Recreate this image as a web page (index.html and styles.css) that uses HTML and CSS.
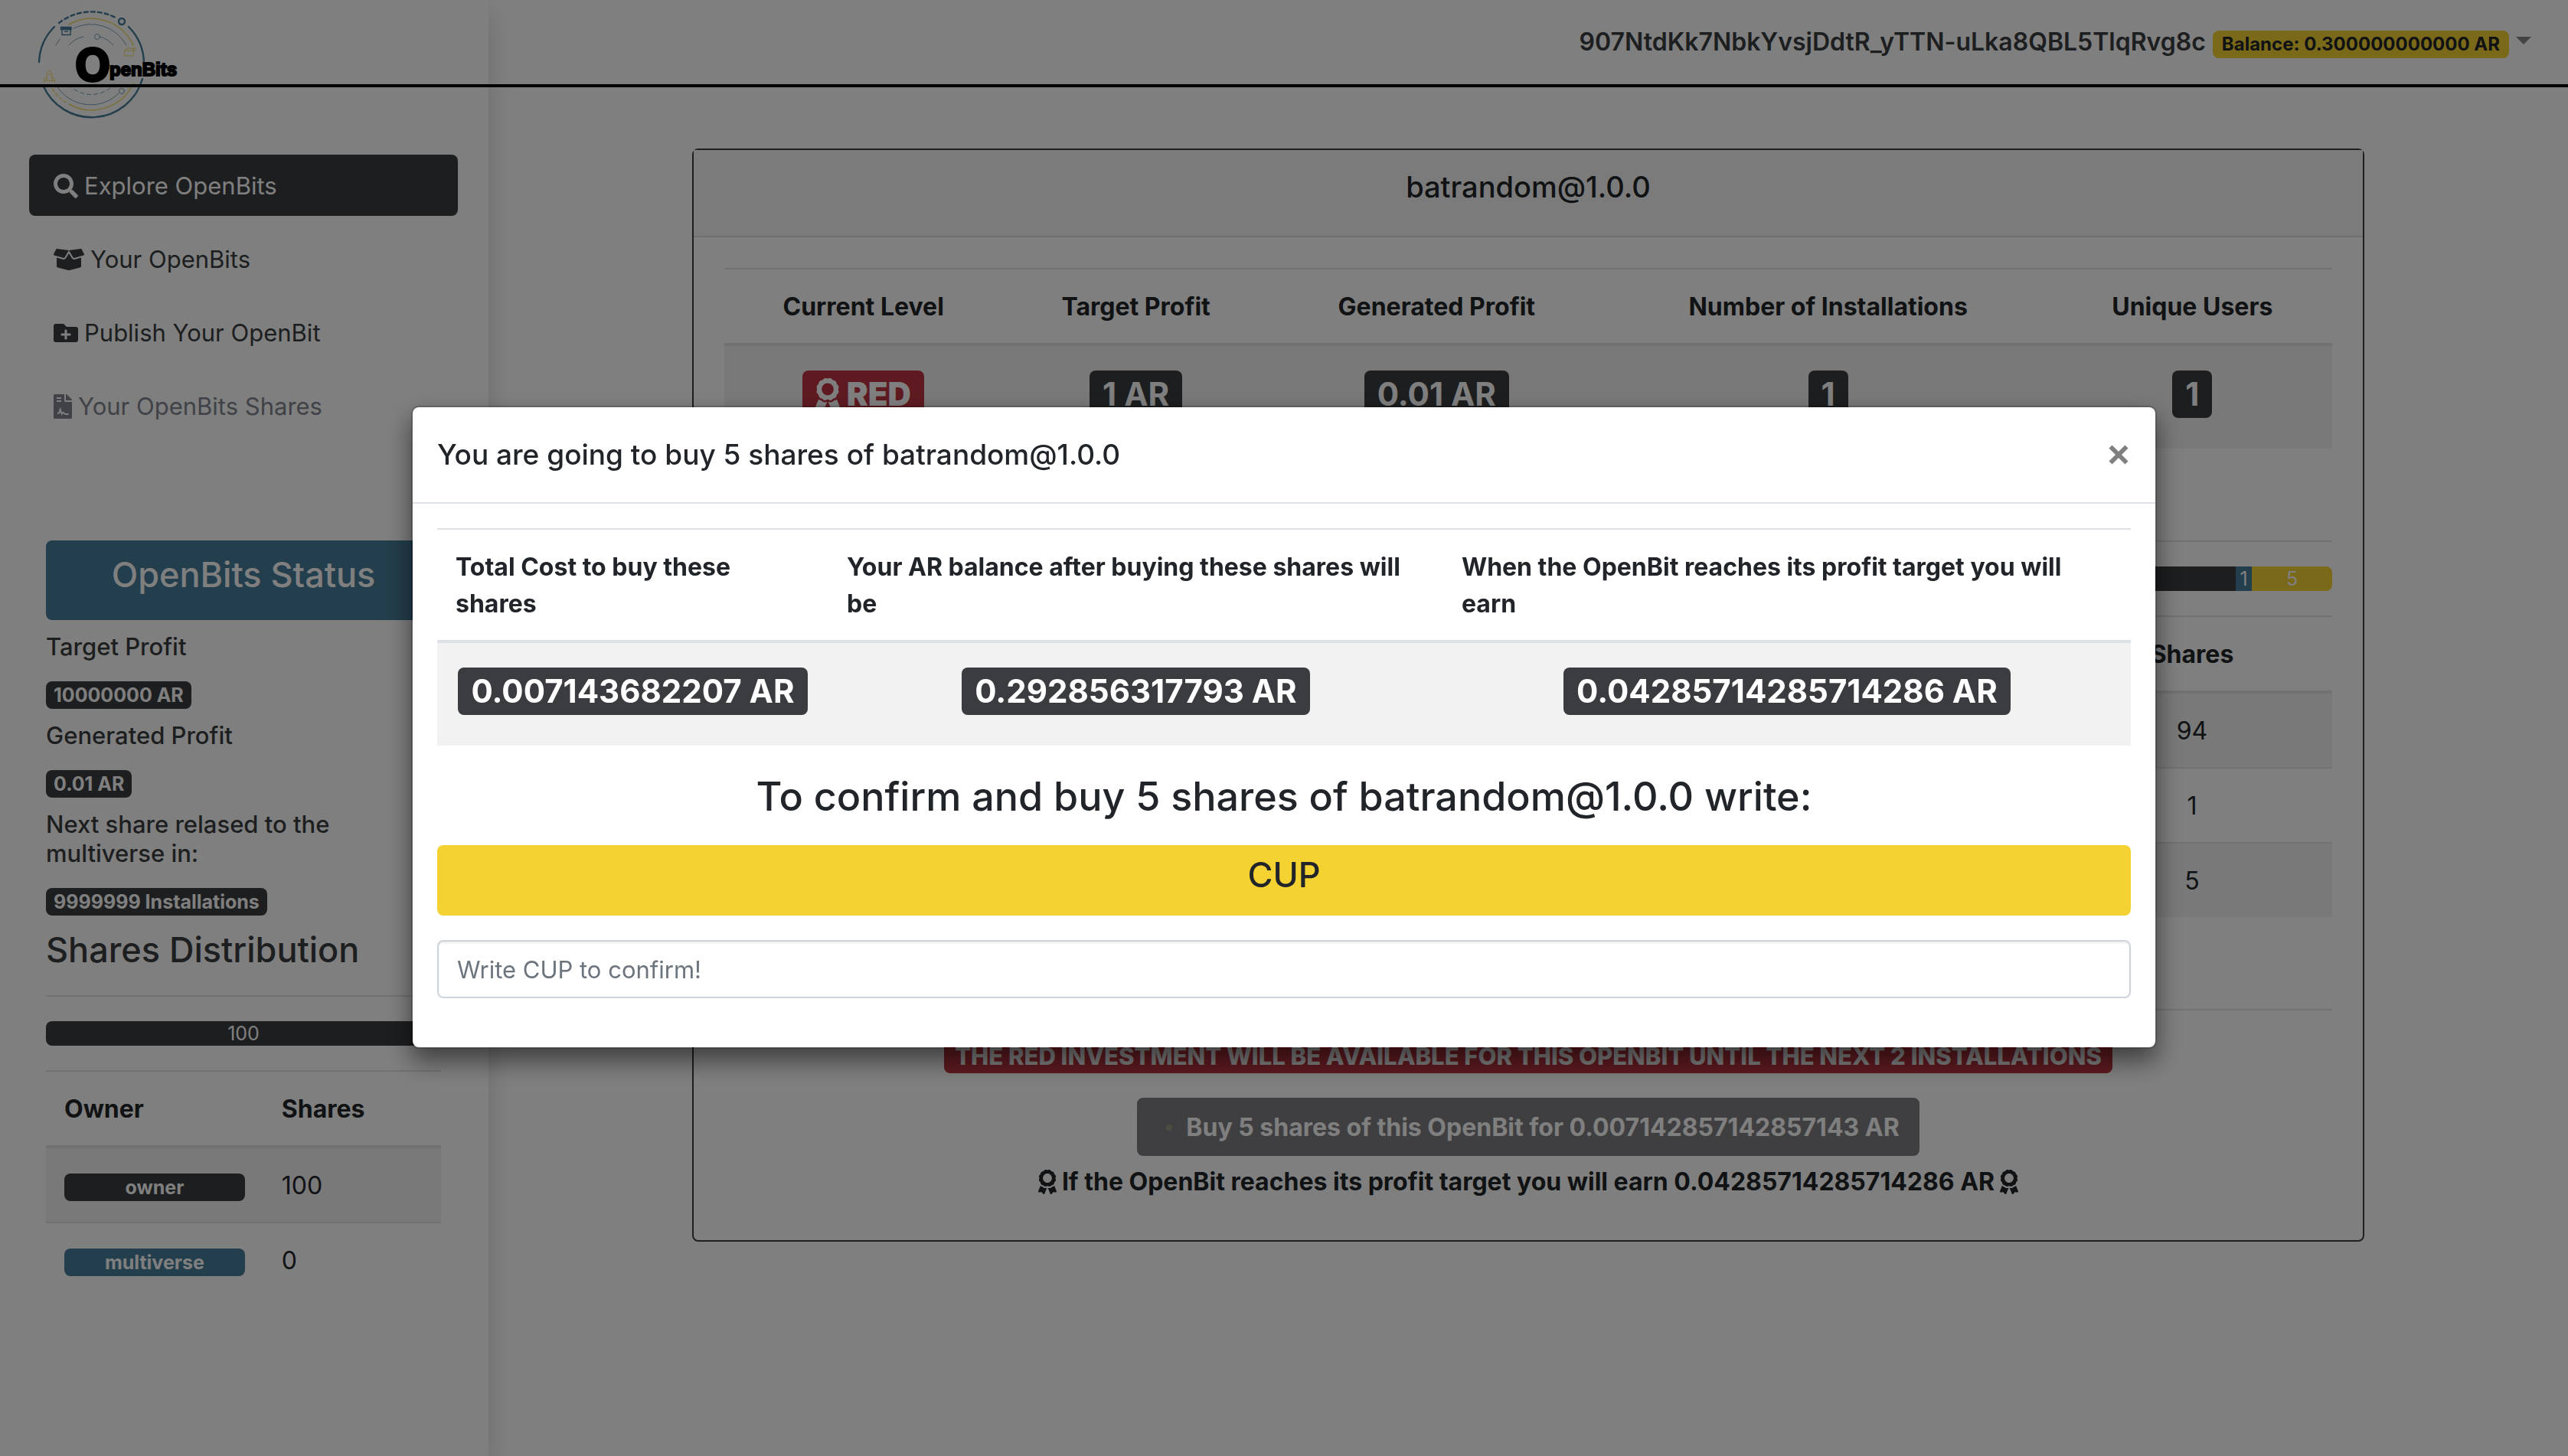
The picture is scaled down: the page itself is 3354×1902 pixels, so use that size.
FILE: index.html
```html
<!DOCTYPE html>
<html lang="en">
<head>
<meta charset="utf-8">
<title>OpenBits</title>
<meta name="viewport" content="width=device-width, initial-scale=1">
<link rel="stylesheet" href="styles.css">
</head>
<body>
<svg class="sprite" aria-hidden="true">
  <symbol id="award" viewBox="0 0 384 512"><path d="M97.12 362.63c-8.69-8.69-4.16-6.24-25.12-11.85-9.51-2.55-17.87-7.45-25.43-13.32L1.2 448.7c-4.39 10.77 3.81 22.47 15.43 22.03l52.69-2.01L105.56 507c8 8.44 22.04 5.81 26.43-4.96l52.05-127.62c-10.84 6.04-22.87 9.58-35.31 9.58-19.5 0-37.82-7.59-51.61-21.37zM382.8 448.7l-45.37-111.24c-7.56 5.88-15.92 10.77-25.43 13.32-21.07 5.64-16.45 3.18-25.12 11.85-13.79 13.78-32.12 21.37-51.62 21.37-12.44 0-24.47-3.55-35.31-9.58L252 502.04c4.39 10.77 18.44 13.4 26.43 4.96l36.25-38.28 52.69 2.01c11.62.44 19.82-11.27 15.43-22.03zM263 340c15.28-15.55 17.03-14.21 38.79-20.14 13.89-3.79 24.75-14.84 28.47-28.98 7.48-28.4 5.54-24.97 25.95-45.75 10.17-10.35 14.14-25.44 10.42-39.58-7.47-28.38-7.48-24.42 0-52.83 3.72-14.14-.25-29.23-10.42-39.58-20.41-20.78-18.47-17.36-25.95-45.75-3.72-14.14-14.58-25.19-28.47-28.98-27.88-7.61-24.52-5.62-44.95-26.41-10.17-10.35-25-14.4-38.89-10.61-27.87 7.6-23.98 7.61-51.9 0-13.89-3.79-28.72.25-38.89 10.61-20.41 20.78-17.05 18.8-44.94 26.41-13.89 3.79-24.75 14.84-28.47 28.98-7.47 28.39-5.54 24.97-25.95 45.75-10.17 10.35-14.15 25.44-10.42 39.58 7.47 28.36 7.48 24.4 0 52.82-3.72 14.14.25 29.23 10.42 39.59 20.41 20.77 18.47 17.35 25.95 45.75 3.72 14.14 14.58 25.19 28.47 28.98C104.6 325.96 106.27 325 121 340c13.23 13.47 33.84 15.88 49.74 5.82a39.676 39.676 0 0 1 42.53 0c15.89 10.06 36.5 7.65 49.73-5.82zM97.66 175.96c0-53.03 42.24-96.02 94.34-96.02s94.34 42.99 94.34 96.02-42.24 96.02-94.34 96.02-94.34-42.99-94.34-96.02z"/></symbol>
</svg>

<div class="app">
  <aside class="sidebar">
    <nav class="nav">
      <a class="nav-link active" href="#explore">
        <svg class="icon" viewBox="0 0 512 512" aria-hidden="true"><path d="M505 442.7L405.3 343c-4.5-4.5-10.6-7-17-7H372c27.6-35.3 44-79.7 44-128C416 93.1 322.9 0 208 0S0 93.1 0 208s93.1 208 208 208c48.3 0 92.7-16.4 128-44v16.3c0 6.4 2.5 12.5 7 17l99.7 99.7c9.4 9.4 24.6 9.4 33.9 0l28.3-28.3c9.4-9.4 9.4-24.6.1-34zM208 336c-70.7 0-128-57.2-128-128 0-70.7 57.2-128 128-128 70.7 0 128 57.2 128 128 0 70.7-57.2 128-128 128z"/></svg>
        Explore OpenBits</a>
      <a class="nav-link" href="#yours">
        <svg class="icon icon-wide" viewBox="0 0 640 512" aria-hidden="true"><path d="M425.7 256c-16.9 0-32.8-9-41.4-23.4L320 126l-64.2 106.6c-8.7 14.5-24.6 23.5-41.5 23.5-4.5 0-9-.6-13.3-1.9L64 215v178c0 14.7 10 27.5 24.2 31l216.2 54.1c10.2 2.5 20.9 2.5 31 0L551.8 424c14.2-3.6 24.2-16.4 24.2-31V215l-137 39.1c-4.3 1.3-8.8 1.9-13.3 1.9zm212.6-112.2L586.8 41c-3.1-6.2-9.8-9.8-16.7-8.9L320 64l91.7 152.1c3.8 6.3 11.4 9.3 18.5 7.3l197.9-56.5c9.9-2.9 14.7-13.9 10.2-23.1zM53.2 41L1.7 143.8c-4.6 9.2.3 20.2 10.1 23l197.9 56.5c7.1 2 14.7-1 18.5-7.3L320 64 69.8 32.1c-6.9-.8-13.5 2.7-16.6 8.9z"/></svg>
        Your OpenBits</a>
      <a class="nav-link" href="#publish">
        <svg class="icon" viewBox="0 0 512 512" aria-hidden="true"><path d="M464,128H272L208,64H48A48,48,0,0,0,0,112V400a48,48,0,0,0,48,48H464a48,48,0,0,0,48-48V176A48,48,0,0,0,464,128ZM359.5,296a16,16,0,0,1-16,16h-64v64a16,16,0,0,1-16,16h-16a16,16,0,0,1-16-16V312h-64a16,16,0,0,1-16-16V280a16,16,0,0,1,16-16h64V200a16,16,0,0,1,16-16h16a16,16,0,0,1,16,16v64h64a16,16,0,0,1,16,16Z"/></svg>
        Publish Your OpenBit</a>
      <a class="nav-link disabled" href="#shares" aria-disabled="true">
        <svg class="icon icon-narrow" viewBox="0 0 384 512" aria-hidden="true"><path d="M377 105L279.1 7c-4.5-4.5-10.6-7-17-7H256v128h128v-6.1c0-6.3-2.5-12.4-7-16.9zM224 136V0H24C10.7 0 0 10.7 0 24v464c0 13.3 10.7 24 24 24h336c13.3 0 24-10.7 24-24V160H248c-13.2 0-24-10.8-24-24z"/><path d="M64 80h96M64 144h96M80 400h14c12 0 20-6 24-17l22-64 30 88c12-26 40-30 56-4 6 10 14 13 26 13h62" fill="none" stroke="#fff" stroke-width="32"/></svg>
        Your OpenBits Shares</a>
    </nav>

    <section class="status">
      <h3 class="status-title">OpenBits Status</h3>
      <dl class="facts">
        <dt>Target Profit</dt>
        <dd><span class="badge">10000000 AR</span></dd>
        <dt>Generated Profit</dt>
        <dd><span class="badge">0.01 AR</span></dd>
        <dt>Next share relased to the multiverse in:</dt>
        <dd><span class="badge">9999999 Installations</span></dd>
      </dl>
      <h3 class="section-title">Shares Distribution</h3>
      <hr>
      <div class="progress"><div class="bar" style="width:100%">100</div></div>
      <table class="table owners">
        <thead><tr><th scope="col">Owner</th><th scope="col">Shares</th></tr></thead>
        <tbody>
          <tr><td><span class="badge badge-fill">owner</span></td><td>100</td></tr>
          <tr><td><span class="badge badge-fill badge-info">multiverse</span></td><td>0</td></tr>
        </tbody>
      </table>
    </section>
  </aside>

  <header class="topbar">
    <a class="brand" href="#home" aria-label="OpenBits">
      <svg class="logo" viewBox="44 8 190 152" aria-hidden="true">
        <g fill="none" stroke="#477c98" stroke-linecap="round">
          <path d="M51 81A69 69 0 0 1 71 35M168 35A69 69 0 0 1 188 84M186 103A69 69 0 0 1 56 111" stroke-width="2.4"/>
          <path d="M77 30A69 69 0 0 1 153 24" stroke-width="2.4" stroke-dasharray="5 4"/>
          <circle cx="159" cy="28" r="4" stroke-width="2.4"/>
          <path d="M96 37A52 52 0 0 1 165 59M74 112A52 52 0 0 0 155 122M90 59Q98 50 109 48M131 48Q141 51 148 59M73 59L78 51" stroke-width="1" opacity=".7"/>
          <path d="M90 111Q102 123 119 123.500Q138 123 149 110" stroke-width="1" stroke-dasharray="5 4" opacity=".7"/>
          <circle cx="127" cy="48" r="3.500" stroke-width="1" opacity=".7"/>
          <circle cx="159" cy="119" r="3.500" stroke-width="1" opacity=".7"/>
          <path d="M81 37h11v8.500h-11zM79.500 35.500h13.500v3h-13.500zM84.500 41h4" stroke-width="1.400"/>
        </g>
        <g fill="none" stroke="#f4d232" stroke-linecap="round" opacity=".75">
          <path d="M90 32A60 60 0 0 1 174 59M174 109A60 60 0 0 1 90 136" stroke-width="1.500"/>
          <path d="M65 110A60 60 0 0 0 88 135" stroke-width="1.300" stroke-dasharray="4 3"/>
          <path d="M163 66h11v7h-11zM163 66l3-3h9l-1 3M174 68q4-4 2-6M61 105v-6q0-5 3.500-7q3.500 2 3.500 7v6zM61 100l-3.500 4v3l3.500-2M68 100l3.500 4v3l-3.500-2M63 97h3" stroke-width="1"/>
        </g>
        <text class="logo-initial" x="97" y="107">O</text>
        <text class="logo-name" x="143" y="99">penBits</text>
      </svg>
    </a>
    <button class="account" type="button">
      <span class="address">907NtdKk7NbkYvsjDdtR_yTTN-uLka8QBL5TlqRvg8c</span>
      <span class="badge badge-warning">Balance: 0.300000000000 AR</span>
      <span class="caret"></span>
    </button>
  </header>

  <main class="main">
    <article class="card">
      <h1 class="card-header">batrandom@1.0.0</h1>
      <div class="card-body">
        <table class="table centered stats">
          <colgroup><col class="c-level"><col class="c-target"><col class="c-generated"><col class="c-installs"><col class="c-users"></colgroup>
          <thead><tr><th scope="col">Current Level</th><th scope="col">Target Profit</th><th scope="col">Generated Profit</th><th scope="col">Number of Installations</th><th scope="col">Unique Users</th></tr></thead>
          <tbody><tr>
            <td><span class="badge badge-lg badge-danger badge-level"><svg class="award" aria-hidden="true"><use href="#award"/></svg> RED</span></td>
            <td><span class="badge badge-lg">1 AR</span></td>
            <td><span class="badge badge-lg">0.01 AR</span></td>
            <td><span class="badge badge-lg">1</span></td>
            <td><span class="badge badge-lg">1</span></td>
          </tr></tbody>
        </table>

        <hr class="section-rule">
        <div class="progress">
          <div class="bar" style="width:94%"></div>
          <div class="bar bar-info" style="width:1%">1</div>
          <div class="bar bar-warning" style="width:5%">5</div>
        </div>
        <table class="table centered holders">
          <thead><tr><th></th><th scope="col">Shares</th></tr></thead>
          <tbody>
            <tr><td></td><td>94</td></tr>
            <tr><td></td><td>1</td></tr>
            <tr><td></td><td>5</td></tr>
          </tbody>
        </table>
        <hr class="section-rule">
        <div class="invest">
          <span class="badge badge-danger badge-notice">THE RED INVESTMENT WILL BE AVAILABLE FOR THIS OPENBIT UNTIL THE NEXT 2 INSTALLATIONS</span>
          <button class="buy" type="button" disabled><span class="spinner"></span>Buy 5 shares of this OpenBit for 0.007142857142857143 AR</button>
          <p class="earn"><svg class="award" aria-hidden="true"><use href="#award"/></svg>If the OpenBit reaches its profit target you will earn 0.04285714285714286 AR<svg class="award" aria-hidden="true"><use href="#award"/></svg></p>
        </div>
      </div>
    </article>
  </main>
</div>

<div class="backdrop">
  <div class="modal" role="dialog" aria-modal="true" aria-labelledby="modal-title">
    <div class="modal-header">
      <h2 class="modal-title" id="modal-title">You are going to buy 5 shares of batrandom@1.0.0</h2>
      <button class="close" type="button" aria-label="Close"><svg viewBox="0 0 24 24" aria-hidden="true"><path d="M3 3l18 18M21 3L3 21" fill="none" stroke="currentColor" stroke-width="5"/></svg></button>
    </div>
    <div class="modal-body">
      <table class="table purchase">
        <colgroup><col class="c-cost"><col class="c-balance"><col class="c-earn"></colgroup>
        <thead><tr><th scope="col">Total Cost to buy these shares</th><th scope="col">Your AR balance after buying these shares will be</th><th scope="col">When the OpenBit reaches its profit target you will earn</th></tr></thead>
        <tbody><tr>
          <td><span class="badge badge-lg">0.007143682207 AR</span></td>
          <td><span class="badge badge-lg">0.292856317793 AR</span></td>
          <td><span class="badge badge-lg">0.04285714285714286 AR</span></td>
        </tr></tbody>
      </table>
      <label class="prompt" for="confirm">To confirm and buy 5 shares of batrandom@1.0.0 write:</label>
      <p class="word">CUP</p>
      <input class="field" id="confirm" type="text" placeholder="Write CUP to confirm!">
    </div>
  </div>
</div>
</body>
</html>
```
FILE: styles.css
```css
*, *::before, *::after { box-sizing: border-box; }

:root {
  --dark: #3a3c40;
  --ink: #212529;
  --info: #477c98;
  --warning: #f4d232;
  --danger: #bc3541;
  --line: #dee2e6;
}

body {
  margin: 0;
  background: #fff;
  color: var(--ink);
  font-family: Inter, "Liberation Sans", sans-serif;
  font-size: 32px;
  line-height: 48px;
}

h1, h2, h3, p, dl, dd { margin: 0; font-weight: 500; }
button, input { font: inherit; color: inherit; }
hr { width: 100%; height: 2px; margin: 0; border: 0; background: #e5e5e5; }
.sprite { display: none; }

.app {
  display: grid;
  grid-template-columns: 638px 1fr;
  grid-template-rows: auto 1fr;
  min-height: 100vh;
}

/* Top bar */
.topbar {
  grid-area: 1 / 1 / 2 / 3;
  display: flex;
  justify-content: space-between;
  align-items: flex-start;
  height: 114px;
  padding: 8px 48px 0 44px;
  border-bottom: 4px solid #000;
}
.logo { position: relative; z-index: -1; display: block; width: 190px; height: 152px; overflow: visible; }
.logo-initial { font: 900 62px Inter, sans-serif; }
.logo-name { font: bold 24px "Liberation Sans", sans-serif; stroke: #000; stroke-width: 2px; }
.account {
  display: flex;
  align-items: baseline;
  gap: 9px;
  margin-top: 23px;
  padding: 0;
  border: 0;
  background: none;
  font-weight: 600;
  color: var(--dark);
}
.caret {
  align-self: flex-start;
  margin-top: 17px;
  border: 10px solid transparent;
  border-top-color: #868686;
  border-bottom: 0;
}

/* Badges */
.badge {
  display: inline-block;
  padding: 6px 10px;
  border-radius: 8px;
  background: var(--dark);
  color: #fff;
  font-size: 25px;
  line-height: 24px;
  font-weight: 700;
  text-align: center;
  white-space: nowrap;
}
.badge-fill { width: 100%; }
.badge-info { background: var(--info); }
.badge-warning { padding: 6px 12px; background: var(--warning); color: var(--ink); font-size: 24px; }
.badge-danger { background: var(--danger); font-weight: 800; }
.badge-lg { padding: 10px 17px; font-size: 42px; line-height: 42px; }
.badge-level { font-weight: 900; }
.badge-notice { padding: 10px 14px 6px; font-size: 31px; line-height: 32px; }
.award { width: 24px; height: 32px; fill: currentColor; }
.badge-lg .award { width: 32px; height: 42px; vertical-align: -6px; }

/* Side bar */
.sidebar {
  grid-area: 1 / 1 / 3 / 2;
  padding: 202px 40px 40px 38px;
  box-shadow: 0 16px 32px rgba(0, 0, 0, .15);
}
.nav { display: flex; flex-direction: column; gap: 16px; }
.nav-link {
  display: flex;
  align-items: center;
  gap: 8px;
  padding: 17px 32px 15px;
  border-radius: 8px;
  color: var(--dark);
  font-size: 31px;
  text-decoration: none;
}
.nav-link.active { background: var(--dark); color: #fff; }
.nav-link.disabled { color: #80858f; }
.icon { width: 32px; height: 32px; fill: currentColor; }
.icon-wide { width: 40px; }
.icon-narrow { width: 24px; }

.status { margin: 136px 22px 0; }
.status-title {
  padding: 16px 16px 30px;
  border-radius: 8px;
  background: var(--info);
  color: #fff;
  font-size: 45px;
  line-height: 58px;
  text-align: center;
}
.facts { color: var(--dark); font-size: 31px; }
.facts dt { margin: 16px 0 26px; line-height: 38px; font-weight: 500; }
.facts dd { display: flex; }
.section-title { margin: 16px 0 30px; font-size: 45px; line-height: 58px; color: var(--dark); }

/* Progress */
.progress {
  display: flex;
  height: 32px;
  margin: 32px 0;
  border-radius: 8px;
  overflow: hidden;
  color: #fff;
  font-size: 25px;
  line-height: 32px;
  text-align: center;
}
.bar { background: var(--dark); }
.bar-info { background: var(--info); }
.bar-warning { background: var(--warning); }

/* Tables */
.table { width: 100%; table-layout: fixed; border-collapse: separate; border-spacing: 0; }
.table th { padding: 25px 24px 23px; border-top: 2px solid var(--line); border-bottom: 4px solid var(--line); font-weight: 700; text-align: left; }
.table td { padding: 25px 24px 23px; font-weight: 400; vertical-align: top; }
.table tbody tr:nth-child(odd) { background: #f2f2f2; }
.table tbody tr + tr td { border-top: 2px solid var(--line); }
.table.centered th, .table.centered td { text-align: center; }
.owners th:first-child { width: 55%; }
.holders th:last-child { width: 366px; }
.table.stats td, .table.purchase td { height: 134px; padding: 32px 24px 40px; line-height: 62px; text-align: center; }
.stats td .badge, .purchase td .badge { vertical-align: top; }
.c-level { width: 17.3%; }
.c-target { width: 16.6%; }
.c-generated { width: 20.8%; }
.c-installs { width: 27.9%; }
.c-users { width: 17.4%; }
.c-cost { width: 23.1%; }
.c-balance { width: 36.3%; }
.c-earn { width: 40.6%; }

/* Card */
.main { grid-area: 2 / 2 / 3 / 3; padding: 80px 32px; }
.card { max-width: 2184px; margin: 0 auto; border: 2px solid var(--dark); border-radius: 8px; }
.card-header { padding: 24px 40px 40px; border-bottom: 2px solid #dfdfdf; background: #f7f7f7; font-size: 38px; text-align: center; }
.card-body { padding: 40px 40px 52px; }
.section-rule { margin-top: 120px; }
.invest { display: flex; flex-direction: column; align-items: center; padding-top: 34px; }
.buy {
  display: flex;
  align-items: center;
  gap: 18px;
  margin: 32px 0 10px;
  padding: 13px 24px 11px;
  border: 2px solid var(--dark);
  border-radius: 8px;
  background: var(--dark);
  color: #fff;
  font-weight: 700;
  opacity: .65;
}
.spinner { width: 8px; height: 8px; margin-left: 12px; border-radius: 50%; background: var(--warning); opacity: .25; }
.earn { display: flex; align-items: center; gap: 7px; font-weight: 700; }

/* Modal */
.backdrop {
  position: fixed;
  inset: 0;
  display: flex;
  align-items: center;
  justify-content: center;
  padding: 30px 32px 32px;
  background: rgba(0, 0, 0, .5);
}
.modal {
  width: 100%;
  max-width: 2280px;
  border: 2px solid rgba(0, 0, 0, .2);
  border-radius: 10px;
  background: #fff;
  background-clip: padding-box;
  box-shadow: 0 16px 32px rgba(0, 0, 0, .5);
}
.modal-header { display: flex; justify-content: space-between; align-items: center; padding: 32px; border-bottom: 2px solid var(--line); }
.modal-title { font-size: 37px; line-height: 60px; }
.close { display: flex; padding: 2px; border: 0; background: none; color: #7f7f7f; }
.close svg { width: 28px; height: 28px; }
.modal-body { display: flex; flex-direction: column; padding: 32px 32px 64px; }
.prompt { margin: 33px 0 29px; font-size: 52px; line-height: 68px; font-weight: 500; text-align: center; }
.word { padding: 10px 0 24px; border-radius: 8px; background: var(--warning); font-size: 45px; line-height: 58px; text-align: center; }
.field {
  width: 100%;
  height: 76px;
  margin-top: 32px;
  padding: 12px 24px;
  border: 2px solid #ced4da;
  border-radius: 8px;
  background: #fff;
  box-shadow: inset 0 2px 2px rgba(0, 0, 0, .075);
  font-size: 31px;
}
.field::placeholder { color: #6c757d; opacity: 1; }
```
